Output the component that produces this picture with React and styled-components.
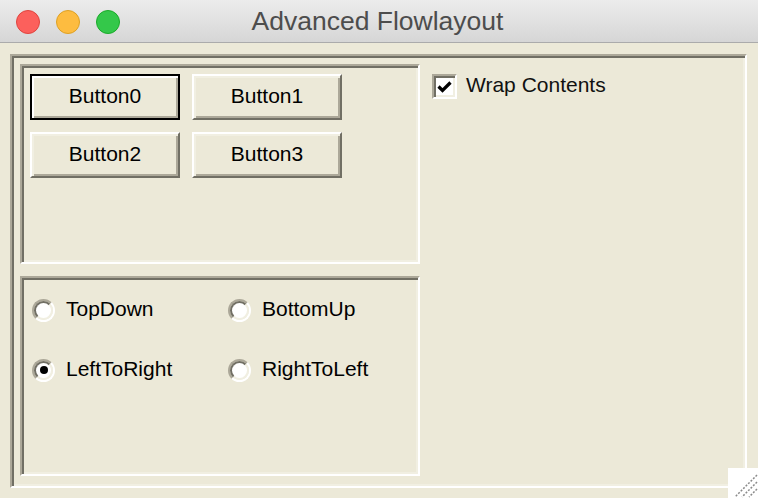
import styled, { createGlobalStyle } from "styled-components";

const GlobalStyle = createGlobalStyle`
  html, body {
    margin: 0;
    padding: 0;
    background: #ece9d8;
  }
  body {
    font-family: "Liberation Sans", Arial, sans-serif;
  }
`;

const Window = styled.div`
  width: 758px;
  height: 498px;
  display: flex;
  flex-direction: column;
  overflow: hidden;
  background: #ece9d8;
`;

const TitleBar = styled.div`
  position: relative;
  height: 42px;
  flex-shrink: 0;
  display: flex;
  align-items: center;
  justify-content: center;
  background: linear-gradient(#ececec, #d6d6d6);
  border-bottom: 1px solid #ababab;
`;

const Lights = styled.div`
  position: absolute;
  left: 16px;
  top: 10px;
  display: flex;
  gap: 16px;
`;

const Light = styled.span`
  width: 22px;
  height: 22px;
  border-radius: 50%;
  background: ${(p) => p.$color};
  border: 1px solid ${(p) => p.$edge};
`;

const Title = styled.div`
  font-family: "Liberation Sans", Arial, sans-serif;
  font-size: 26.5px;
  color: #4d4d4d;
  margin-left: -3px;
`;

const Body = styled.div`
  position: relative;
  flex: 1;
  padding: 11px 11px 10px 10px;
  font-family: "Liberation Sans", Arial, sans-serif;
  font-size: 21px;
  color: #000;
`;

const lowered = `
  border-style: solid;
  border-width: 2px;
  border-color: #aca899 #fff #fff #aca899;
  box-shadow: inset 2px 2px 0 #716f64, inset -2px -2px 0 #f1efe2;
`;

const Frame = styled.div`
  ${lowered}
  box-sizing: border-box;
  height: 100%;
  display: flex;
  padding: 8px;
`;

const LeftColumn = styled.div`
  width: 400px;
  display: flex;
  flex-direction: column;
  gap: 12px;
`;

const Panel = styled.div`
  ${lowered}
  box-sizing: border-box;
  height: 200px;
`;

const ButtonFlow = styled.div`
  display: flex;
  flex-wrap: wrap;
  gap: 12px;
  padding: 8px;
`;

const FlowButton = styled.button`
  box-sizing: border-box;
  width: 150px;
  height: 46px;
  padding: 0 0 2px;
  background: #ece9d8;
  font-family: inherit;
  font-size: 21px;
  color: #000;
  border-style: solid;
  border-width: 2px;
  border-color: ${(p) => (p.$focused ? "#000" : "#fff #716f64 #716f64 #fff")};
  box-shadow: ${(p) =>
    p.$focused
      ? "inset 2px 2px 0 #fff, inset -2px -2px 0 #aca899"
      : "inset 2px 2px 0 #f1efe2, inset -2px -2px 0 #aca899"};
`;

const RadioGrid = styled.div`
  display: grid;
  grid-template-columns: 196px 196px;
  grid-template-rows: repeat(3, 60px);
  padding: 2px;
`;

const RadioItem = styled.label`
  display: flex;
  align-items: center;
  gap: 11px;
  padding-left: 8px;
`;

const RadioLabel = styled.span`
  margin-top: -3px;
`;

const RadioOuter = styled.span`
  box-sizing: border-box;
  width: 23px;
  height: 23px;
  border-radius: 50%;
  border: 2px solid;
  border-color: #aca899 #fff #fff #aca899;
  display: flex;
`;

const RadioInner = styled.span`
  box-sizing: border-box;
  flex: 1;
  border-radius: 50%;
  border: 2px solid;
  border-color: #716f64 #f1efe2 #f1efe2 #716f64;
  background: #fff;
  display: flex;
  align-items: center;
  justify-content: center;
`;

const Dot = styled.span`
  width: 8px;
  height: 8px;
  border-radius: 50%;
  background: #000;
`;

const RightArea = styled.div`
  flex: 1;
  padding: 10px 12px;
`;

const CheckRow = styled.label`
  display: flex;
  align-items: center;
  gap: 9px;
  color: #111;
`;

const CheckText = styled.span`
  margin-top: -3px;
`;

const CheckBox = styled.span`
  ${lowered}
  box-sizing: border-box;
  width: 25px;
  height: 25px;
  background: #fff;
  display: flex;
  align-items: center;
  justify-content: center;
`;

const Grip = styled.div`
  position: absolute;
  right: 0;
  bottom: 0;
  width: 30px;
  height: 30px;
  background: #fff;
`;

function Radio({ label, checked }) {
  return (
    <RadioItem>
      <RadioOuter>
        <RadioInner>{checked && <Dot />}</RadioInner>
      </RadioOuter>
      <RadioLabel>{label}</RadioLabel>
    </RadioItem>
  );
}

export default function App() {
  return (
    <Window>
      <GlobalStyle />
      <TitleBar>
        <Lights>
          <Light $color="#fc605c" $edge="#e0443e" />
          <Light $color="#fdbc40" $edge="#dea123" />
          <Light $color="#34c84a" $edge="#1aab29" />
        </Lights>
        <Title>Advanced Flowlayout</Title>
      </TitleBar>
      <Body>
        <Frame>
          <LeftColumn>
            <Panel>
              <ButtonFlow>
                <FlowButton $focused>Button0</FlowButton>
                <FlowButton>Button1</FlowButton>
                <FlowButton>Button2</FlowButton>
                <FlowButton>Button3</FlowButton>
              </ButtonFlow>
            </Panel>
            <Panel>
              <RadioGrid>
                <Radio label="TopDown" />
                <Radio label="BottomUp" />
                <Radio label="LeftToRight" checked />
                <Radio label="RightToLeft" />
              </RadioGrid>
            </Panel>
          </LeftColumn>
          <RightArea>
            <CheckRow>
              <CheckBox>
                <svg width="15" height="12" viewBox="0 0 15 12">
                  <path d="M1.5 5.5 L5.5 9.5 L13.5 1.5" fill="none" stroke="#000" strokeWidth="3.2" />
                </svg>
              </CheckBox>
              <CheckText>Wrap Contents</CheckText>
            </CheckRow>
          </RightArea>
        </Frame>
        <Grip>
          <svg width="30" height="30" viewBox="0 0 30 30">
            <g stroke="#8a8a8a" strokeWidth="1.5" strokeDasharray="2 1.5">
              <line x1="29" y1="7" x2="7" y2="29" />
              <line x1="29" y1="14" x2="14" y2="29" />
              <line x1="29" y1="21" x2="21" y2="29" />
            </g>
          </svg>
        </Grip>
      </Body>
    </Window>
  );
}
